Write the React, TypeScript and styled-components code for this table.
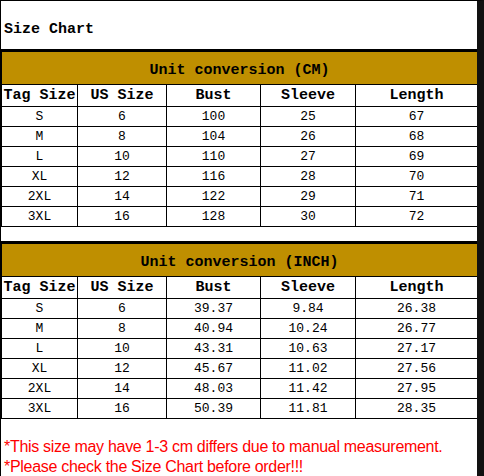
import React from 'react';
import styled, { createGlobalStyle } from 'styled-components';

const GlobalStyle = createGlobalStyle`
  html, body {
    margin: 0;
    padding: 0;
    background: #111;
  }
`;

const Page = styled.div`
  width: 476px;
  height: 475px;
  overflow: hidden;
  background: #fff;
  border-top: 1px solid #000;
  border-left: 1px solid #000;
  border-right: 7px solid #111;
`;

const Title = styled.div`
  box-sizing: border-box;
  height: 48px;
  padding: 19px 0 0 3px;
  font-family: 'Liberation Mono', 'DejaVu Sans Mono', monospace;
  font-weight: bold;
  font-size: 15px;
  line-height: 20px;
  color: #000;
`;

const Table = styled.table<{ $gap?: number }>`
  width: 476px;
  border-collapse: collapse;
  table-layout: fixed;
  margin-top: ${p => p.$gap ?? 0}px;
  border: 1px solid #000;
  border-top: 3px solid #000;
  font-family: 'Liberation Mono', 'DejaVu Sans Mono', monospace;
  color: #000;
`;

const Caption = styled.td`
  height: 28px;
  padding: 4px 0 0;
  background: #bf8f00;
  text-align: center;
  font-weight: bold;
  font-size: 15px;
  border-bottom: 1px solid #000;
`;

const HeadCell = styled.td`
  height: 21px;
  padding: 0;
  border: 1px solid #000;
  text-align: center;
  font-weight: bold;
  font-size: 15px;
  line-height: 21px;
  white-space: nowrap;
  overflow: hidden;
`;

const Cell = styled.td`
  height: 19px;
  padding: 0;
  border: 1px solid #000;
  text-align: center;
  font-size: 13px;
  line-height: 19px;
`;

const Notes = styled.div`
  margin-top: 18px;
  padding-left: 3px;
  font-family: 'Liberation Sans', Arial, sans-serif;
  font-size: 16px;
  line-height: 20px;
  letter-spacing: -0.3px;
  color: #ff0000;
`;

const widths = [76, 89, 94, 95, 122];
const headers = ['Tag Size', 'US Size', 'Bust', 'Sleeve', 'Length'];
const sizes = ['S', 'M', 'L', 'XL', '2XL', '3XL'];
const us = ['6', '8', '10', '12', '14', '16'];

const cmRows = [
  ['100', '25', '67'],
  ['104', '26', '68'],
  ['110', '27', '69'],
  ['116', '28', '70'],
  ['122', '29', '71'],
  ['128', '30', '72'],
];

const inchRows = [
  ['39.37', '9.84', '26.38'],
  ['40.94', '10.24', '26.77'],
  ['43.31', '10.63', '27.17'],
  ['45.67', '11.02', '27.56'],
  ['48.03', '11.42', '27.95'],
  ['50.39', '11.81', '28.35'],
];

const SizeTable = ({ unit, rows, gap }: { unit: string; rows: string[][]; gap?: number }) => (
  <Table $gap={gap}>
    <colgroup>
      {widths.map((w, i) => (
        <col key={i} style={{ width: w }} />
      ))}
    </colgroup>
    <tbody>
      <tr>
        <Caption colSpan={5}>Unit conversion ({unit})</Caption>
      </tr>
      <tr>
        {headers.map(h => (
          <HeadCell key={h}>{h}</HeadCell>
        ))}
      </tr>
      {rows.map((r, i) => (
        <tr key={sizes[i]}>
          <Cell>{sizes[i]}</Cell>
          <Cell>{us[i]}</Cell>
          {r.map((v, j) => (
            <Cell key={j}>{v}</Cell>
          ))}
        </tr>
      ))}
    </tbody>
  </Table>
);

export default function App() {
  return (
    <>
      <GlobalStyle />
      <Page>
        <Title>Size Chart</Title>
        <SizeTable unit="CM" rows={cmRows} />
        <SizeTable unit="INCH" rows={inchRows} gap={14} />
        <Notes>
          *This size may have 1-3 cm differs due to manual measurement.
          <br />
          *Please check the Size Chart before order!!!
        </Notes>
      </Page>
    </>
  );
}
